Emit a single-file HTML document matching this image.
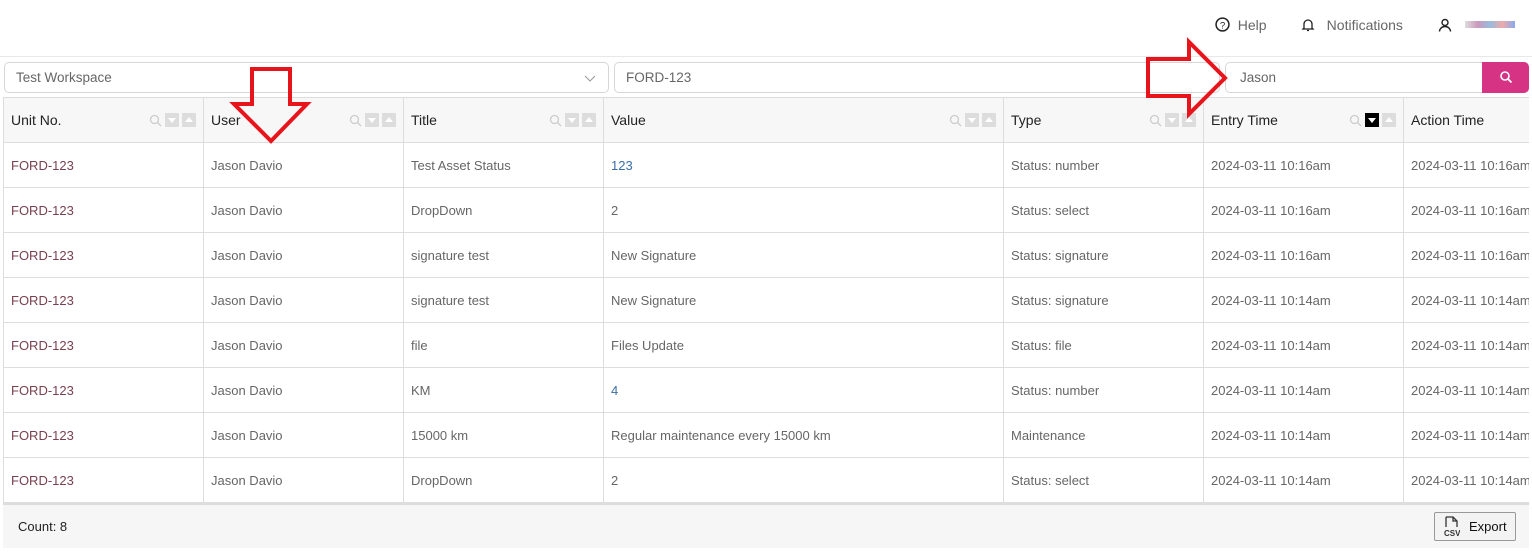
<!DOCTYPE html>
<html><head><meta charset="utf-8"><style>
body{margin:0;width:1532px;height:559px;overflow:hidden;background:#fff;font-family:"Liberation Sans",sans-serif;font-size:13px;color:#555;position:relative}
.top{position:absolute;left:0;top:0;width:1532px;height:56px;border-bottom:1px solid #e8e8e8}
.nav{position:absolute;top:17px;font-size:14px;color:#666}
.inp{position:absolute;top:62px;border:1px solid #d6d6d6;border-radius:5px;box-sizing:border-box;height:31px;padding:7px 11px;color:#666;font-size:13.5px}
.grid{position:absolute;left:3px;top:97px;width:1526px;height:451px;overflow:hidden}
table{border-collapse:collapse;table-layout:fixed;width:1600px}
td,th{border-right:1px solid #ddd;border-bottom:1px solid #ddd;height:44px;padding:0 7px;text-align:left;white-space:nowrap;overflow:hidden;font-weight:normal}
td:first-child,th:first-child{border-left:1px solid #ddd}
th{background:#f7f7f7;color:#222;font-size:14px;position:relative;border-top:1px solid #ddd}
td{color:#666}
td.u{color:#7a4150}
td.b{color:#3b6ea5}
.ic{position:absolute;right:7px;top:15px;display:flex;gap:3px;align-items:center}
.sq{width:14px;height:14px;background:#ddd;position:relative}
.sq.d:after{content:"";position:absolute;left:3px;top:5px;border-left:4px solid transparent;border-right:4px solid transparent;border-top:5px solid #fff}
.sq.u:after{content:"";position:absolute;left:3px;top:4px;border-left:4px solid transparent;border-right:4px solid transparent;border-bottom:5px solid #fff}
.sq.k{background:#000}
.foot{position:absolute;left:3px;top:503px;width:1526px;height:45px;background:#f6f6f6;border-top:2px solid #ddd;box-sizing:border-box}
</style></head><body>
<div class="top"></div>
<div class="nav" style="left:1215px"><svg width="15" height="15" viewBox="0 0 14 14" style="vertical-align:-2px"><circle cx="7" cy="7" r="6" fill="none" stroke="#222" stroke-width="1.4"/><text x="7" y="10.5" font-size="9" text-anchor="middle" fill="#222" font-family="Liberation Sans">?</text></svg>&nbsp; Help</div>
<div class="nav" style="left:1301px"><svg width="14" height="14" viewBox="0 0 14 14" style="vertical-align:-2px"><path d="M3 10V6a4 4 0 0 1 8 0v4l1 1H2z M6 12.5h2" fill="none" stroke="#222" stroke-width="1.3"/></svg>&nbsp;&nbsp; Notifications</div>
<div class="nav" style="left:1438px"><svg width="14" height="14" viewBox="0 0 14 14" style="vertical-align:-2px"><circle cx="7" cy="4.5" r="3" fill="none" stroke="#222" stroke-width="1.4"/><path d="M1.5 13.5a5.5 5 0 0 1 11 0" fill="none" stroke="#222" stroke-width="1.4"/></svg></div>
<div style="position:absolute;left:1465px;top:21px;width:50px;height:7px;background:linear-gradient(90deg,#ddd,#c9b,#9bd,#eaa,#8ae)"></div>
<div class="inp" style="left:4px;width:605px">Test Workspace<svg width="12" height="8" style="position:absolute;right:12px;top:12px"><path d="M1 1l5 5 5-5" fill="none" stroke="#999"/></svg></div>
<div class="inp" style="left:614px;width:606px">FORD-123</div>
<div class="inp" style="left:1225px;width:304px;padding-left:14px">Jason<div style="position:absolute;right:-1px;top:-1px;width:47px;height:31px;background:#d63384;border-radius:0 5px 5px 0"><svg width="14" height="14" viewBox="0 0 14 14" style="position:absolute;left:17px;top:8px"><circle cx="6" cy="6" r="4" fill="none" stroke="#fff" stroke-width="1.6"/><path d="M9 9l3.5 3.5" stroke="#fff" stroke-width="1.8"/></svg></div></div>
<div class="grid"><table>
<colgroup><col style="width:200px"><col style="width:200px"><col style="width:200px"><col style="width:400px"><col style="width:200px"><col style="width:200px"><col style="width:200px"></colgroup>
<tr><th>Unit No.<span class="ic"><svg width="13" height="13"><circle cx="5.5" cy="5.5" r="4" fill="none" stroke="#ccc" stroke-width="1.3"/><path d="M8.5 8.5l3.5 3.5" stroke="#ccc" stroke-width="1.3"/></svg><span class="sq d"></span><span class="sq u"></span></span></th>
<th>User<span class="ic"><svg width="13" height="13"><circle cx="5.5" cy="5.5" r="4" fill="none" stroke="#ccc" stroke-width="1.3"/><path d="M8.5 8.5l3.5 3.5" stroke="#ccc" stroke-width="1.3"/></svg><span class="sq d"></span><span class="sq u"></span></span></th>
<th>Title<span class="ic"><svg width="13" height="13"><circle cx="5.5" cy="5.5" r="4" fill="none" stroke="#ccc" stroke-width="1.3"/><path d="M8.5 8.5l3.5 3.5" stroke="#ccc" stroke-width="1.3"/></svg><span class="sq d"></span><span class="sq u"></span></span></th>
<th>Value<span class="ic"><svg width="13" height="13"><circle cx="5.5" cy="5.5" r="4" fill="none" stroke="#ccc" stroke-width="1.3"/><path d="M8.5 8.5l3.5 3.5" stroke="#ccc" stroke-width="1.3"/></svg><span class="sq d"></span><span class="sq u"></span></span></th>
<th>Type<span class="ic"><svg width="13" height="13"><circle cx="5.5" cy="5.5" r="4" fill="none" stroke="#ccc" stroke-width="1.3"/><path d="M8.5 8.5l3.5 3.5" stroke="#ccc" stroke-width="1.3"/></svg><span class="sq d"></span><span class="sq u"></span></span></th>
<th>Entry Time<span class="ic"><svg width="13" height="13"><circle cx="5.5" cy="5.5" r="4" fill="none" stroke="#ccc" stroke-width="1.3"/><path d="M8.5 8.5l3.5 3.5" stroke="#ccc" stroke-width="1.3"/></svg><span class="sq d k"></span><span class="sq u"></span></span></th>
<th>Action Time</th></tr>
<tr><td class="u">FORD-123</td><td>Jason Davio</td><td>Test Asset Status</td><td class="b">123</td><td>Status: number</td><td>2024-03-11 10:16am</td><td>2024-03-11 10:16am</td></tr>
<tr><td class="u">FORD-123</td><td>Jason Davio</td><td>DropDown</td><td>2</td><td>Status: select</td><td>2024-03-11 10:16am</td><td>2024-03-11 10:16am</td></tr>
<tr><td class="u">FORD-123</td><td>Jason Davio</td><td>signature test</td><td>New Signature</td><td>Status: signature</td><td>2024-03-11 10:16am</td><td>2024-03-11 10:16am</td></tr>
<tr><td class="u">FORD-123</td><td>Jason Davio</td><td>signature test</td><td>New Signature</td><td>Status: signature</td><td>2024-03-11 10:14am</td><td>2024-03-11 10:14am</td></tr>
<tr><td class="u">FORD-123</td><td>Jason Davio</td><td>file</td><td>Files Update</td><td>Status: file</td><td>2024-03-11 10:14am</td><td>2024-03-11 10:14am</td></tr>
<tr><td class="u">FORD-123</td><td>Jason Davio</td><td>KM</td><td class="b">4</td><td>Status: number</td><td>2024-03-11 10:14am</td><td>2024-03-11 10:14am</td></tr>
<tr><td class="u">FORD-123</td><td>Jason Davio</td><td>15000 km</td><td>Regular maintenance every 15000 km</td><td>Maintenance</td><td>2024-03-11 10:14am</td><td>2024-03-11 10:14am</td></tr>
<tr><td class="u">FORD-123</td><td>Jason Davio</td><td>DropDown</td><td>2</td><td>Status: select</td><td>2024-03-11 10:14am</td><td>2024-03-11 10:14am</td></tr>
</table></div>
<div class="foot"><span style="position:absolute;left:15px;top:14px;color:#222;font-size:13px">Count: 8</span>
<div style="position:absolute;right:13px;top:7px;width:82px;height:29px;border:1px solid #999;border-radius:2px;background:#f3f3f3;box-sizing:border-box;font-size:13px;color:#111"><svg width="16" height="22" style="position:absolute;left:9px;top:3px"><path d="M2 1h7l4 4v6M2 1v10M9 1v4h4" fill="none" stroke="#333" stroke-width="1.3"/><text x="0" y="20" font-size="8" font-family="Liberation Sans" fill="#333" font-weight="bold">CSV</text></svg><span style="position:absolute;left:34px;top:6px">Export</span></div></div>
<svg width="1532" height="559" style="position:absolute;left:0;top:0;pointer-events:none">
<polygon points="252,69 290,69 290,104 307,104 271,141 234,104 252,104" fill="none" stroke="#e8141c" stroke-width="4"/>
<polygon points="1148,59 1189,59 1189,42 1225,78 1189,114 1189,96 1148,96" fill="none" stroke="#e8141c" stroke-width="4"/>
</svg>
</body></html>
